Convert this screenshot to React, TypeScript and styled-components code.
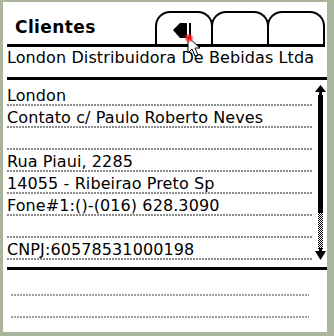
import React from "react";
import styled, { createGlobalStyle } from "styled-components";

const GlobalStyle = createGlobalStyle`
  html, body {
    margin: 0;
    padding: 0;
    background: #a9b59d;
  }
  * {
    box-sizing: border-box;
  }
`;

const Frame = styled.div`
  width: 334px;
  height: 336px;
  background: #a9b59d;
  padding: 2px 0 0 3px;
  overflow: hidden;
`;

const Screen = styled.div`
  position: relative;
  width: 324px;
  height: 330px;
  background: #ffffff;
  display: flex;
  flex-direction: column;
  font-family: "DejaVu Sans", "Liberation Sans", sans-serif;
  color: #000;
`;

const TitleBar = styled.div`
  display: flex;
  align-items: flex-end;
  height: 45px;
  margin: 0 2px 0 4px;
  padding-left: 8px;
  border-bottom: 3px solid #000;
`;

const Title = styled.div`
  font-weight: bold;
  font-size: 17px;
  line-height: 17px;
  letter-spacing: 0.4px;
  margin-bottom: 8px;
`;

const Tabs = styled.div`
  display: flex;
  margin-left: auto;
`;

const Tab = styled.div`
  width: 58px;
  height: 33px;
  margin-left: -2px;
  border: 2px solid #000;
  border-bottom: none;
  border-radius: 15px 15px 0 0;
  padding: 9px 0 0 16px;
  background: #fff;
`;

const Company = styled.div`
  margin-left: 4px;
  height: 33px;
  padding-top: 3px;
  font-size: 16px;
  line-height: 15px;
  letter-spacing: 0.1px;
  white-space: nowrap;
  border-bottom: 3px solid #000;
`;

const FieldArea = styled.div`
  display: flex;
  height: 187px;
  margin-left: 4px;
  padding-top: 4px;
`;

const Lines = styled.div`
  width: 306px;
  display: flex;
  flex-direction: column;
`;

const Row = styled.div<{ $dot: string }>`
  height: 22px;
  padding-top: 3px;
  font-size: 16px;
  line-height: 18px;
  letter-spacing: 0.1px;
  white-space: nowrap;
  background-image: linear-gradient(to right, ${(p) => p.$dot} 2px, transparent 2px);
  background-size: 3px 2px;
  background-repeat: repeat-x;
  background-position: left bottom;
`;

const ScrollBar = styled.svg`
  display: block;
  margin: 1px 0 0 2px;
  flex-shrink: 0;
`;

const Notes = styled.div`
  margin-left: 4px;
  border-top: 3px solid #000;
  padding: 4px 0 0 4px;
`;

const NoteLine = styled(Row)`
  width: 298px;
`;

const Cursor = styled.svg`
  position: absolute;
  left: 178px;
  top: 28px;
  pointer-events: none;
`;

const rows = [
  "London",
  "Contato c/ Paulo Roberto Neves",
  "",
  "Rua Piaui, 2285",
  "14055 - Ribeirao Preto Sp",
  "Fone#1:()-(016) 628.3090",
  "",
  "CNPJ:60578531000198",
];

function BackIcon() {
  return (
    <svg width="20" height="18" viewBox="0 0 20 18">
      <polygon points="0,8 7,1 14,1 14,16 7,16" fill="#000" />
      <rect x="16" y="1" width="2" height="15" fill="#000" />
    </svg>
  );
}

function Scroller() {
  return (
    <ScrollBar width="11" height="176" viewBox="0 0 11 176">
      <defs>
        <pattern id="chk" width="2" height="2" patternUnits="userSpaceOnUse">
          <rect width="2" height="2" fill="#fff" />
          <rect width="1" height="1" fill="#000" />
          <rect x="1" y="1" width="1" height="1" fill="#000" />
        </pattern>
      </defs>
      <polygon points="5.5,0 0,7 11,7" fill="#000" />
      <rect x="4" y="7" width="3" height="3" fill="#000" />
      <rect x="3" y="10" width="5" height="118" fill="#000" />
      <rect x="3" y="128" width="5" height="36" fill="url(#chk)" />
      <rect x="4" y="163" width="3" height="3" fill="#000" />
      <polygon points="0,166 11,166 5.5,175" fill="#000" />
    </ScrollBar>
  );
}

export default function App() {
  return (
    <>
      <GlobalStyle />
      <Frame>
        <Screen>
          <TitleBar>
            <Title>Clientes</Title>
            <Tabs>
              <Tab>
                <BackIcon />
              </Tab>
              <Tab />
              <Tab />
            </Tabs>
          </TitleBar>
          <Company>London Distribuidora De Bebidas Ltda</Company>
          <FieldArea>
            <Lines>
              {rows.map((r, i) => (
                <Row key={i} $dot="#8c8c8c">
                  {r}
                </Row>
              ))}
            </Lines>
            <Scroller />
          </FieldArea>
          <Notes>
            <NoteLine $dot="#a0a0a0" />
            <NoteLine $dot="#a0a0a0" />
          </Notes>
          <Cursor width="24" height="28" viewBox="0 0 24 28">
            <defs>
              <radialGradient id="glow">
                <stop offset="0" stopColor="#ff0000" />
                <stop offset="0.5" stopColor="#ff2020" stopOpacity="0.8" />
                <stop offset="1" stopColor="#ff4040" stopOpacity="0" />
              </radialGradient>
            </defs>
            <polygon
              points="7,7 7,23 11,19 14,26 17,25 14,18 19,18"
              fill="#fff"
              stroke="#000"
              strokeWidth="1"
            />
            <circle cx="8" cy="8" r="5" fill="url(#glow)" />
          </Cursor>
        </Screen>
      </Frame>
    </>
  );
}
